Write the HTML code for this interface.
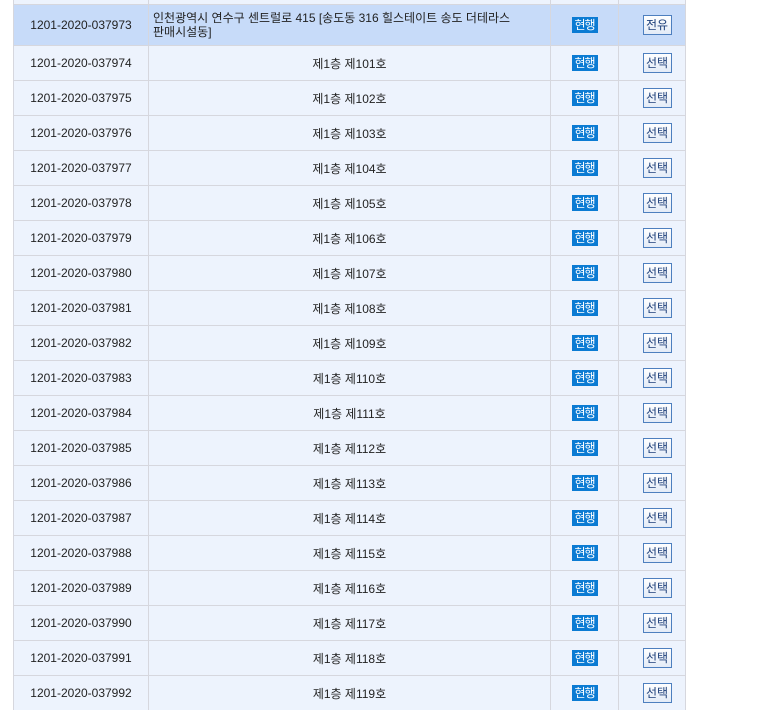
<!DOCTYPE html>
<html><head><meta charset="utf-8"><style>
body{margin:0;background:#fff;width:777px;height:685px;overflow:hidden;position:relative;font-family:"Liberation Sans","Noto Sans CJK KR",sans-serif;font-size:12px;color:#222}
.r{position:absolute;left:13px;width:673px;background:#edf3fd;border-top:1px solid #d6d7de;box-sizing:border-box}
.r.h{background:#c7dbf9}
.c{position:absolute;top:0;bottom:0;display:flex;align-items:center;border-left:1px solid #d6d7de;box-sizing:border-box;white-space:nowrap}
.c1{left:0;width:135px;justify-content:center}
.c2{left:135px;width:402px;justify-content:center}
.c3{left:537px;width:68px;justify-content:center}
.c4{left:605px;width:68px;justify-content:center;border-right:1px solid #d6d7de}
.b{background:#0b7bd3;color:#fff;font-size:12px;line-height:16px;padding:0 2px;white-space:nowrap;display:inline-block;width:22px;text-align:center;letter-spacing:-1px}
.s{border:1px solid #4d7fbf;background:linear-gradient(#fff,#e3ebf7);color:#1d3f7a;font-size:12px;line-height:18px;width:27px;text-align:center;margin-left:10px;white-space:nowrap;display:inline-block}
</style></head><body>
<div class="r" style="top:-2px;height:6px"><div class="c c1"></div><div class="c c2"></div><div class="c c3"></div><div class="c c4"></div></div>
<div class="r h" style="top:4px;height:41px"><div class="c c1">1201-2020-037973</div><div class="c c2" style="justify-content:flex-start;padding-left:4px;line-height:14px;white-space:normal">인천광역시 연수구 센트럴로 415 [송도동 316 힐스테이트 송도 더테라스<br>판매시설동]</div><div class="c c3"><span class="b">현행</span></div><div class="c c4"><span class="s">전유</span></div></div>
<div id="rows"></div>
<script>
var h='';for(var i=0;i<19;i++){var n=37974+i,t=45+35*i,rm=101+i;
h+='<div class="r" style="top:'+t+'px;height:35px"><div class="c c1">1201-2020-0'+n+'</div><div class="c c2">제1층 제'+rm+'호</div><div class="c c3"><span class="b">현행</span></div><div class="c c4"><span class="s">선택</span></div></div>';}
document.getElementById('rows').innerHTML=h;
</script>
</body></html>
